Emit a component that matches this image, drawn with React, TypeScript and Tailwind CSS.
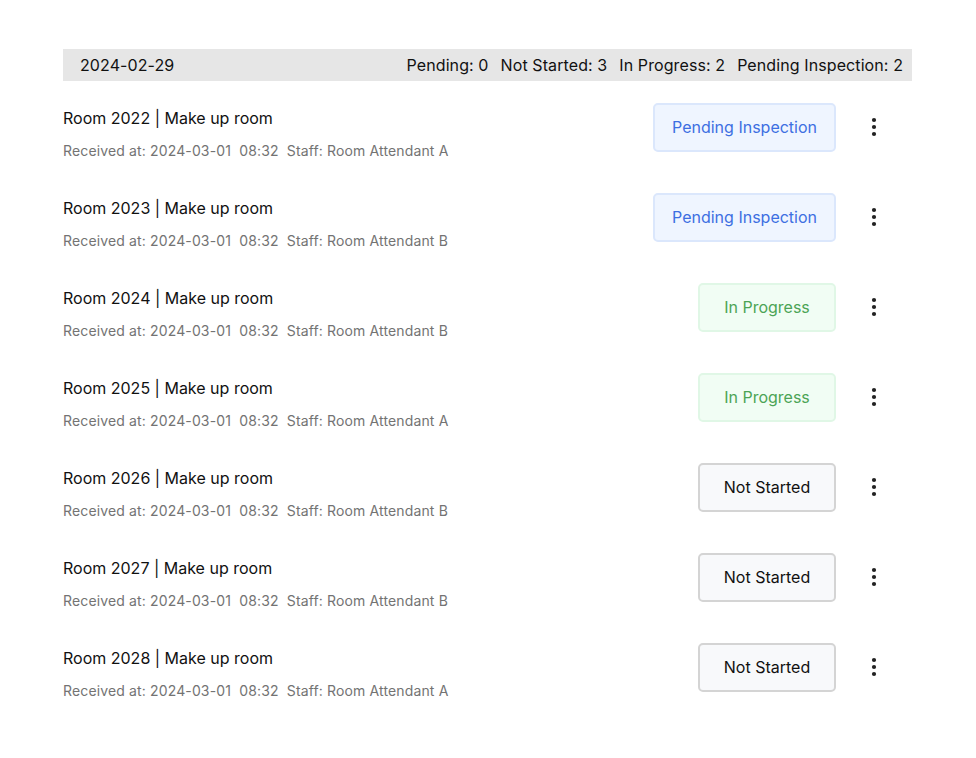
import React from "react";

type Status = "Pending Inspection" | "In Progress" | "Not Started";

const rows: { room: string; staff: string; status: Status }[] = [
  { room: "2022", staff: "Room Attendant A", status: "Pending Inspection" },
  { room: "2023", staff: "Room Attendant B", status: "Pending Inspection" },
  { room: "2024", staff: "Room Attendant B", status: "In Progress" },
  { room: "2025", staff: "Room Attendant A", status: "In Progress" },
  { room: "2026", staff: "Room Attendant B", status: "Not Started" },
  { room: "2027", staff: "Room Attendant B", status: "Not Started" },
  { room: "2028", staff: "Room Attendant A", status: "Not Started" },
];

function StatusButton({ status }: { status: Status }) {
  if (status === "Pending Inspection") {
    return (
      <div className="h-[49px] min-w-[138px] px-[17px] flex items-center justify-center rounded-[5px] border-2 border-[#dbe7fc] bg-[#eff5ff] text-[#3d6fe2] text-[16px]">
        {status}
      </div>
    );
  }
  if (status === "In Progress") {
    return (
      <div className="h-[49px] min-w-[138px] px-[17px] flex items-center justify-center rounded-[5px] border-2 border-[#e0f7e6] bg-[#f1fdf4] text-[#4ca455] text-[16px]">
        {status}
      </div>
    );
  }
  return (
    <div className="h-[49px] min-w-[138px] px-[17px] flex items-center justify-center rounded-[5px] border-2 border-[#d4d4d4] bg-[#f8f9fb] text-[#111111] text-[16px]">
      {status}
    </div>
  );
}

function Kebab() {
  return (
    <svg width="8" height="20" viewBox="0 0 8 20" fill="#222222">
      <circle cx="4" cy="3" r="2.1" />
      <circle cx="4" cy="10" r="2.1" />
      <circle cx="4" cy="17" r="2.1" />
    </svg>
  );
}

export default function App() {
  return (
    <div
      className="w-[976px] min-h-[758px] bg-white pt-[49px] pl-[63px] pr-[64px] text-[#111111]"
      style={{ fontFamily: "Inter, 'Noto Sans', sans-serif" }}
    >
      <div className="h-[32px] bg-[#e6e6e6] flex items-center justify-between pl-[17px] pr-[9px] text-[16px] tracking-[0.006em]">
        <span>2024-02-29</span>
        <div className="flex gap-[12px]">
          <span>Pending: 0</span>
          <span>Not Started: 3</span>
          <span>In Progress: 2</span>
          <span>Pending Inspection: 2</span>
        </div>
      </div>
      <div className="pt-[1px]">
        {rows.map((r) => (
          <div key={r.room} className="h-[90px] flex items-center">
            <div className="self-start pt-[24px] flex-1">
              <div className="text-[16px] leading-[24px]">
                Room {r.room} | Make up room
              </div>
              <div className="mt-[11px] text-[14px] leading-[20px] text-[#737373] whitespace-pre tracking-[0.01em]">
                {"Received at: 2024-03-01  08:32  Staff: " + r.staff}
              </div>
            </div>
            <StatusButton status={r.status} />
            <div className="w-[76px] flex items-center justify-center">
              <Kebab />
            </div>
          </div>
        ))}
      </div>
    </div>
  );
}
